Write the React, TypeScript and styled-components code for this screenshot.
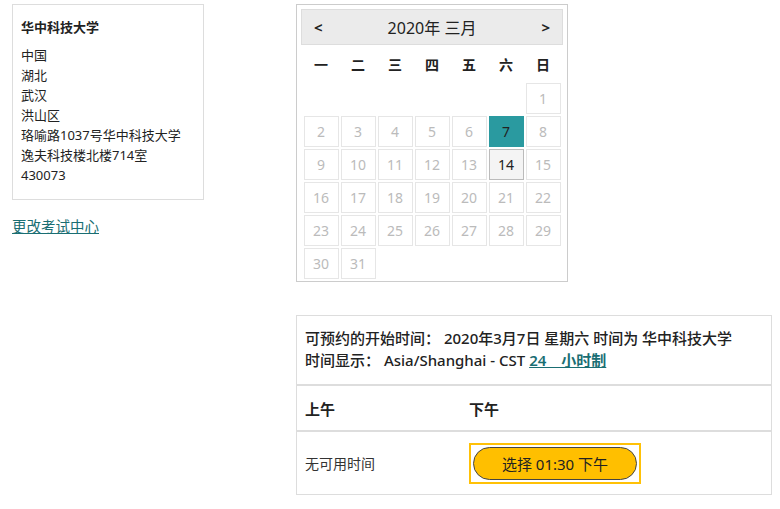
import React from "react";
import styled, { createGlobalStyle } from "styled-components";

const G = createGlobalStyle`
  body { margin: 0; background: #fff; font-family: "Noto Sans", "Noto Sans CJK SC", sans-serif; color: #222; }
`;
const Page = styled.div`display: flex; align-items: flex-start; padding: 4px 0 0 12px;`;
const Left = styled.div`width: 192px; display: flex; flex-direction: column;`;
const AddrBox = styled.div`
  border: 1px solid #ddd; padding: 12px 8px 12px 8px; font-size: 13px; line-height: 20px; height: 170px;
`;
const Name = styled.div`font-weight: 700; margin: 0 0 8px;`;
const Link = styled.a`color: #1a6e73; text-decoration: underline; font-size: 14.5px; margin-top: 15px;`;
const Right = styled.div`margin-left: 92px; display: flex; flex-direction: column;`;
const Cal = styled.div`
  width: 262px; height: 272px; border: 1px solid #ccc; padding: 4px 4px 0 4px; display: flex; flex-direction: column;
`;
const CalHead = styled.div`
  height: 34px; background: #ebebeb; border: 1px solid #ddd; display: flex; align-items: center;
  justify-content: space-between; padding: 0 12px; font-size: 16px; color: #222;
`;
const Arrow = styled.span`font-weight: 700; font-size: 15px;`;
const Grid = styled.div`
  display: grid; grid-template-columns: repeat(7, 35px); column-gap: 2px; row-gap: 2px; justify-content: center; margin-top: 2px;
`;
const Dow = styled.div`height: 34px; display: flex; align-items: center; justify-content: center; font-weight: 700; font-size: 14px;`;
const Cell = styled.div<{ $k: string }>`
  height: 29px; border: 1px solid ${p => p.$k === "sel" ? "#2a9aa0" : p.$k === "cur" ? "#bbb" : "#e6e6e6"};
  background: ${p => p.$k === "sel" ? "#2a9aa0" : p.$k === "cur" ? "#f4f4f4" : "#fff"};
  color: ${p => p.$k === "none" ? "#bbb" : "#222"}; font-size: 14px;
  display: flex; align-items: center; justify-content: center;
  visibility: ${p => p.$k === "empty" ? "hidden" : "visible"};
`;
const Slots = styled.div`width: 474px; border: 1px solid #ddd; margin-top: 33px; font-size: 14px;`;
const Info = styled.div`padding: 11px 8px 13px; font-weight: 500; line-height: 22px; border-bottom: 2px solid #ddd; font-size: 15px;`;
const TL = styled.a`color: #1a6e73; text-decoration: underline; font-weight: 600;`;
const Row = styled.div<{ $h: number; $b?: boolean }>`
  display: grid; grid-template-columns: 164px 1fr; align-items: center; height: ${p => p.$h}px; padding-left: 8px;
  ${p => p.$b ? "border-bottom: 2px solid #ddd; font-weight: 700; font-size: 15px;" : "font-size: 14px; color: #333;"}
`;
const BtnWrap = styled.div`border: 2px solid #ffc107; padding: 2px; width: fit-content;`;
const Btn = styled.button`
  background: #ffbf00; border: 1px solid #444; border-radius: 18px; width: 164px; height: 33px;
  font-size: 15px; font-family: inherit; color: #222;
`;

const dows = ["一","二","三","四","五","六","日"];
export default function App() {
  const cells: { d: string; k: string }[] = [];
  for (let i = 0; i < 6; i++) cells.push({ d: "", k: "empty" });
  for (let d = 1; d <= 31; d++) cells.push({ d: String(d), k: d === 7 ? "sel" : d === 14 ? "cur" : "none" });
  return (
    <Page>
      <G />
      <Left>
        <AddrBox>
          <Name>华中科技大学</Name>
          <div>中国</div><div>湖北</div><div>武汉</div><div>洪山区</div>
          <div>珞喻路1037号华中科技大学</div><div>逸夫科技楼北楼714室</div><div>430073</div>
        </AddrBox>
        <Link>更改考试中心</Link>
      </Left>
      <Right>
        <Cal>
          <CalHead><Arrow>&lt;</Arrow><span>2020年 三月</span><Arrow>&gt;</Arrow></CalHead>
          <Grid>
            {dows.map(d => <Dow key={d}>{d}</Dow>)}
            {cells.map((c, i) => <Cell key={i} $k={c.k}>{c.d}</Cell>)}
          </Grid>
        </Cal>
        <Slots>
          <Info>
            <div>可预约的开始时间： 2020年3月7日 星期六 时间为 华中科技大学</div>
            <div>时间显示： Asia/Shanghai - CST <TL>24　小时制</TL></div>
          </Info>
          <Row $h={44} $b><span>上午</span><span>下午</span></Row>
          <Row $h={62}><span>无可用时间</span><BtnWrap><Btn>选择 01:30 下午</Btn></BtnWrap></Row>
        </Slots>
      </Right>
    </Page>
  );
}
